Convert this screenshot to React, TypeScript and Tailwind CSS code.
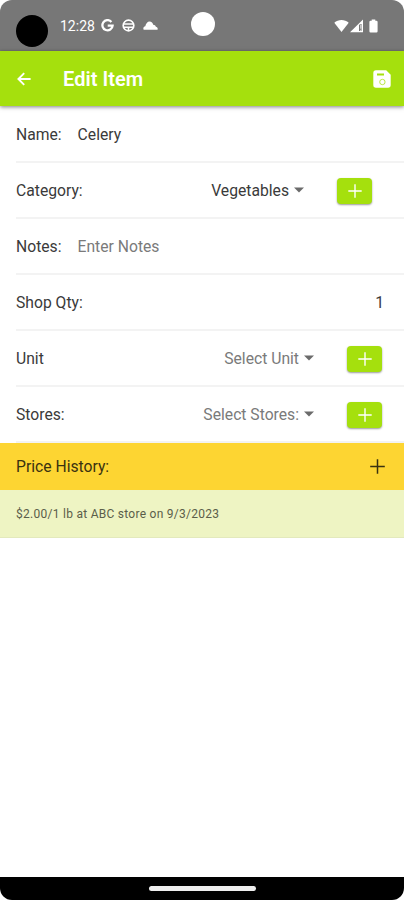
import React from 'react';

interface FormRowProps {
  label: string;
  children?: React.ReactNode;
}

function FormRow({ label, children }: FormRowProps) {
  return (
    <div className="h-14 pl-4 shrink-0">
      <div className="h-full flex items-center border-b-2 border-[#f3f3f3] pt-px text-[#3a3a3a]">
        <span className="whitespace-nowrap">{label}</span>
        {children}
      </div>
    </div>
  );
}

function AddButton() {
  return (
    <button className="w-[35px] h-[26px] shrink-0 rounded-[4px] bg-[#a5e00d] shadow-[0_1px_2px_rgba(0,0,0,0.4)] flex items-center justify-center">
      <svg className="size-[14px]" viewBox="0 0 14 14" stroke="white" strokeWidth="1.4">
        <path d="M7 0.3V13.7M0.3 7H13.7" />
      </svg>
    </button>
  );
}

function Select({ text, placeholder }: { text: string; placeholder?: boolean }) {
  return (
    <div className={`ml-auto flex items-center gap-[5px] ${placeholder ? 'text-[#7a7a7a]' : 'text-[#3a3a3a]'}`}>
      <span>{text}</span>
      <svg className="w-[10px] h-[6px]" viewBox="0 0 10 6" fill="#6b6b6b">
        <path d="M0 0.5H10L5 5.5Z" />
      </svg>
    </div>
  );
}

function StatusBar() {
  return (
    <div className="h-[51px] shrink-0 bg-[#777777] flex text-white">
      <div className="size-8 mt-[15px] ml-4 rounded-full bg-black" />
      <span className="mt-4 ml-3 w-[36px] text-[14px] leading-[20px] whitespace-nowrap">12:28</span>
      <svg className="mt-[19px] ml-[5px] size-[13px]" viewBox="0 0 13 13" fill="none" stroke="white" strokeWidth="2.3">
        <path d="M10.4 2.9A5.1 5.1 0 1 0 11.6 6.6H6.7" />
      </svg>
      <svg className="mt-[19px] ml-[8px] size-[13px]" viewBox="0 0 13 13" fill="none" stroke="white">
        <circle cx="6.5" cy="6.5" r="5.3" strokeWidth="1.7" />
        <path d="M1.5 5H11.5M2 8.2H11M6.5 8V12" strokeWidth="1.6" />
      </svg>
      <svg className="mt-[21px] ml-[8px] w-[15px] h-[9px]" viewBox="0 0 15 9" fill="white">
        <path d="M0.8 8.7C-0.3 7.4 0.6 5.6 2.3 5.3C2.8 2.5 4.4 0.4 6.6 0.4C8.6 0.4 9.8 1.9 10.2 3.8C12 3.8 12.7 5 12.8 5.8C14.3 6 15.1 7.5 14.5 8.7Z" />
      </svg>
      <div className="size-6 mt-3 ml-[33px] rounded-full bg-white" />
      {/* wifi, signal, battery */}
      <svg className="mt-[19px] ml-auto w-[15px] h-[14px]" viewBox="0 0 15 14" fill="white">
        <path d="M0.3 3.8C4.2 0 10.8 0 14.7 3.8L7.5 13Z" />
      </svg>
      <svg className="mt-[19px] ml-px w-[13px] h-[14px]" viewBox="0 0 13 14" fill="white">
        <path fillRule="evenodd" d="M0 13.3L13 0.4V13.3ZM9 5.8V12H11.6V5Z" />
        <path d="M10.4 6H11.2V9.7H10.4ZM10.4 10.7H11.2V12H10.4Z" />
      </svg>
      <svg className="mt-[19px] ml-[6px] mr-[26px] w-[9px] h-[14px]" viewBox="0 0 9 14" fill="white">
        <path d="M2.7 0.5H6.3V1.8H7.4Q8.6 1.8 8.6 3V12.3Q8.6 13.5 7.4 13.5H1.6Q0.4 13.5 0.4 12.3V3Q0.4 1.8 1.6 1.8H2.7Z" />
      </svg>
    </div>
  );
}

function AppBar() {
  return (
    <header className="relative h-[55px] mb-px shrink-0 bg-[#a5e00d] shadow-[0_1px_4px_rgba(0,0,0,0.5)] flex items-center pt-px pl-[17px] pr-[13px] text-white">
      <svg className="size-[14px]" viewBox="0 0 14 14" fill="none" stroke="white" strokeWidth="1.9">
        <path d="M13.6 7H1.5M7.2 1.2L1.4 7L7.2 12.8" />
      </svg>
      <h1 className="ml-8 text-[20px] font-semibold leading-6 tracking-[0.05px]">Edit Item</h1>
      <svg className="ml-auto size-[18px]" viewBox="0 0 18 18">
        <path d="M3 0.3H13.2L17.7 4.8V15Q17.7 17.7 15 17.7H3Q0.3 17.7 0.3 15V3Q0.3 0.3 3 0.3Z" fill="white" />
        <path d="M4 3.6H11V5.6H4Z" fill="#a5e00d" />
        <circle cx="9.4" cy="12" r="2.7" fill="none" stroke="#a5e00d" strokeOpacity="0.75" />
      </svg>
    </header>
  );
}

export default function App() {
  return (
    <div className="h-[900px] w-full flex flex-col bg-white rounded-xl overflow-hidden font-[Roboto,sans-serif] text-[15.7px]">
      <StatusBar />
      <AppBar />

      <main className="flex-1 flex flex-col">
        <FormRow label="Name:">
          <span className="ml-4">Celery</span>
        </FormRow>
        <FormRow label="Category:">
          <Select text="Vegetables" />
          <div className="ml-[33px] mr-8 flex">
            <AddButton />
          </div>
        </FormRow>
        <FormRow label="Notes:">
          <span className="ml-4 text-[#7a7a7a]">Enter Notes</span>
        </FormRow>
        <FormRow label="Shop Qty:">
          <span className="ml-auto mr-5">1</span>
        </FormRow>
        <FormRow label="Unit">
          <Select text="Select Unit" placeholder />
          <div className="ml-[33px] mr-[22px] flex">
            <AddButton />
          </div>
        </FormRow>
        <FormRow label="Stores:">
          <Select text="Select Stores:" placeholder />
          <div className="ml-[33px] mr-[22px] flex">
            <AddButton />
          </div>
        </FormRow>

        <div className="h-[47px] shrink-0 bg-[#fdd532] flex items-center justify-between pl-4 pr-[19px] text-[#3a3210]">
          <span>Price History:</span>
          <svg className="size-[15px]" viewBox="0 0 15 15" stroke="#3a3210" strokeWidth="1.5">
            <path d="M7.5 0.2V14.8M0.2 7.5H14.8" />
          </svg>
        </div>
        <div className="h-12 shrink-0 bg-[#eef4c3] border-b border-[#e3e9bd] flex items-center pl-4 text-[12px] tracking-[0.27px] text-[#5b5e4a]">
          $2.00/1 lb at ABC store on 9/3/2023
        </div>
      </main>

      <div className="h-[23px] shrink-0 bg-black flex justify-center pt-[9px]">
        <div className="w-[107px] h-[5px] rounded-full bg-[#eeeeee]" />
      </div>
    </div>
  );
}
